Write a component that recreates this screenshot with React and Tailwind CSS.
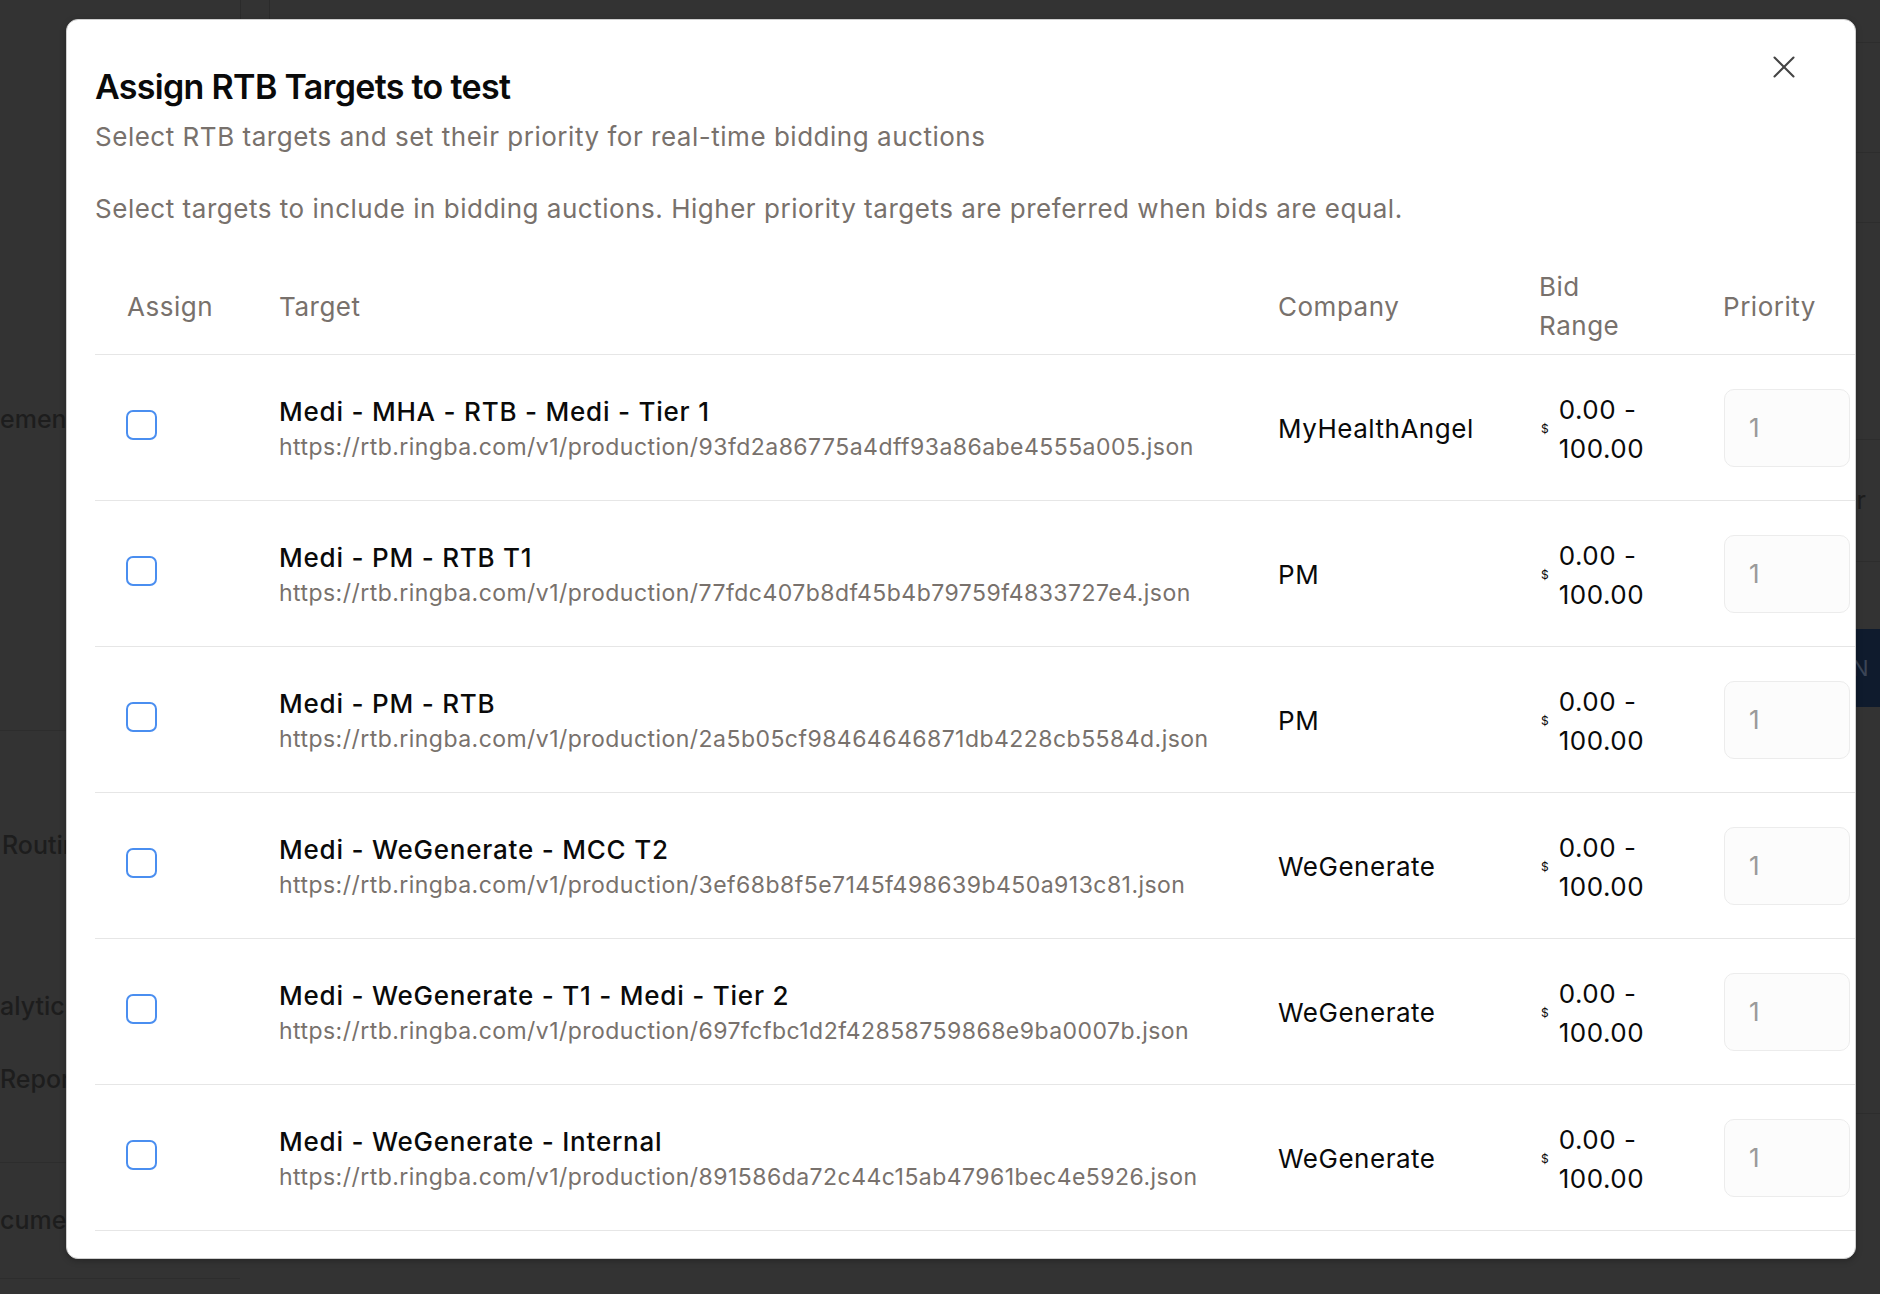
import React from 'react';
import { X } from 'lucide-react';

const BASE = 'https://rtb.ringba.com/v1/production/';

const targets = [
  { name: 'Medi - MHA - RTB - Medi - Tier 1', id: '93fd2a86775a4dff93a86abe4555a005', company: 'MyHealthAngel' },
  { name: 'Medi - PM - RTB T1', id: '77fdc407b8df45b4b79759f4833727e4', company: 'PM' },
  { name: 'Medi - PM - RTB', id: '2a5b05cf98464646871db4228cb5584d', company: 'PM' },
  { name: 'Medi - WeGenerate - MCC T2', id: '3ef68b8f5e7145f498639b450a913c81', company: 'WeGenerate' },
  { name: 'Medi - WeGenerate - T1 - Medi - Tier 2', id: '697fcfbc1d2f42858759868e9ba0007b', company: 'WeGenerate' },
  { name: 'Medi - WeGenerate - Internal', id: '891586da72c44c15ab47961bec4e5926', company: 'WeGenerate' },
];

const cols = 'grid grid-cols-[152px_999px_261px_184px_191px]';

function Backdrop() {
  // dimmed app behind the dialog
  return (
    <div className="flex h-full">
      <div className="w-[240px] h-full flex flex-col text-[25px] font-medium text-[#1d1d1d]">
        <div className="h-[390px] shrink-0" />
        <div className="h-[60px] shrink-0 flex items-center">ement</div>
        <div className="h-[281px] shrink-0 border-b border-[#2d2d2d]" />
        <div className="h-[230px] shrink-0 flex items-center pl-[2px]">Routing</div>
        <div className="h-[92px] shrink-0 flex items-center">alytics</div>
        <div className="h-[54px] shrink-0 flex items-center">Reports</div>
        <div className="h-[56px] shrink-0 border-b border-[#2d2d2d]" />
        <div className="h-[116px] shrink-0 flex items-center border-b border-[#2d2d2d]">cuments</div>
      </div>
      <div className="w-[30px] h-[40px] border-l border-r border-[#2b2b2b]" />
      <div className="flex-1 h-full flex flex-col items-end">
        <div className="w-[40px] h-[43px] shrink-0 border-b border-[#2d2d2d]" />
        <div className="w-[40px] h-[110px] shrink-0 border-b border-[#2d2d2d]" />
        <div className="w-[40px] h-[70px] shrink-0 border-b border-[#2d2d2d]" />
        <div className="w-[40px] h-[217px] shrink-0 border-b border-[#2d2d2d]" />
        <div className="w-[40px] h-[122px] shrink-0 border-b border-[#2d2d2d] flex items-center pl-[2px] text-[25px] text-[#1d1d1d]">er</div>
        <div className="w-[40px] h-[67px] shrink-0" />
        <div className="w-[40px] h-[78px] shrink-0 bg-[#0f1b2d] flex items-center pl-[12px] text-[22px] text-[#3b4556]">N</div>
        <div className="w-[40px] h-[407px] shrink-0 border-b border-[#2d2d2d]" />
      </div>
    </div>
  );
}

export default function App() {
  return (
    <div className="relative w-[1880px] h-[1294px] overflow-hidden bg-[#333333]" style={{ fontFamily: 'Inter, "Noto Sans", sans-serif' }}>
      <Backdrop />

      {/* Dialog */}
      <div className="absolute left-[66px] top-[19px] w-[1790px] h-[1240px] overflow-hidden rounded-[12px] border border-[#cfcfcf] bg-white pl-[28px] shadow-[0_2px_6px_rgba(0,0,0,0.25)]">
        <button className="absolute right-[52px] top-[28px] text-[#444444]">
          <X size={38} strokeWidth={1.3} />
        </button>

        <div className="pt-[47px] pr-[120px]">
          <h2 className="text-[34px] leading-[40px] font-semibold tracking-[-0.02em] text-[#0a0a0a]">
            Assign RTB Targets to test
          </h2>
          <p className="mt-[14px] text-[26px] leading-[32px] tracking-[0.02em] text-[#78716c]">
            Select RTB targets and set their priority for real-time bidding auctions
          </p>
          <p className="mt-[40px] text-[26px] leading-[32px] tracking-[0.02em] text-[#78716c]">
            Select targets to include in bidding auctions. Higher priority targets are preferred when bids are equal.
          </p>
        </div>

        <div className="mt-[33px] w-[1787px]">
          <div className={`${cols} h-[97px] items-center border-b border-[#e6e6e6] text-[26px] leading-[39px] tracking-[0.02em] text-[#78716c]`}>
            <div className="pl-[32px]">Assign</div>
            <div className="pl-[32px]">Target</div>
            <div className="pl-[32px]">Company</div>
            <div className="pl-[32px]">
              <div>Bid</div>
              <div>Range</div>
            </div>
            <div className="pl-[32px]">Priority</div>
          </div>

          {targets.map((t) => (
            <div key={t.id} className={`${cols} h-[146px] items-center border-b border-[#e6e6e6]`}>
              <div className="pl-[31px] flex">
                <span className="mb-[5px] block w-[31px] h-[30px] rounded-[7px] border-2 border-[#4a8ef0] bg-white" />
              </div>
              <div className="pl-[32px] pt-[3px]">
                <div className="text-[26px] leading-[36px] font-medium tracking-[0.03em] text-[#0a0a0a]">{t.name}</div>
                <div className="text-[23px] leading-[34px] tracking-[0.02em] text-[#78716c]">{BASE + t.id}.json</div>
              </div>
              <div className="pl-[32px] pt-[2px] text-[26px] tracking-[0.02em] text-[#0a0a0a]">{t.company}</div>
              <div className="pl-[34px] pt-[2px] flex items-center text-[#0a0a0a]">
                <span className="text-[12px] mr-[10px]">$</span>
                <div className="text-[26px] leading-[39px] tracking-[0.02em]">
                  <div>0.00 -</div>
                  <div>100.00</div>
                </div>
              </div>
              <div className="pl-[33px]">
                <input
                  type="text"
                  readOnly
                  value="1"
                  className="w-[126px] h-[78px] rounded-[10px] border border-[#ececec] bg-[#fcfcfc] pl-[24px] text-[26px] text-[#9a9a9a] outline-none"
                />
              </div>
            </div>
          ))}
        </div>
      </div>
    </div>
  );
}
